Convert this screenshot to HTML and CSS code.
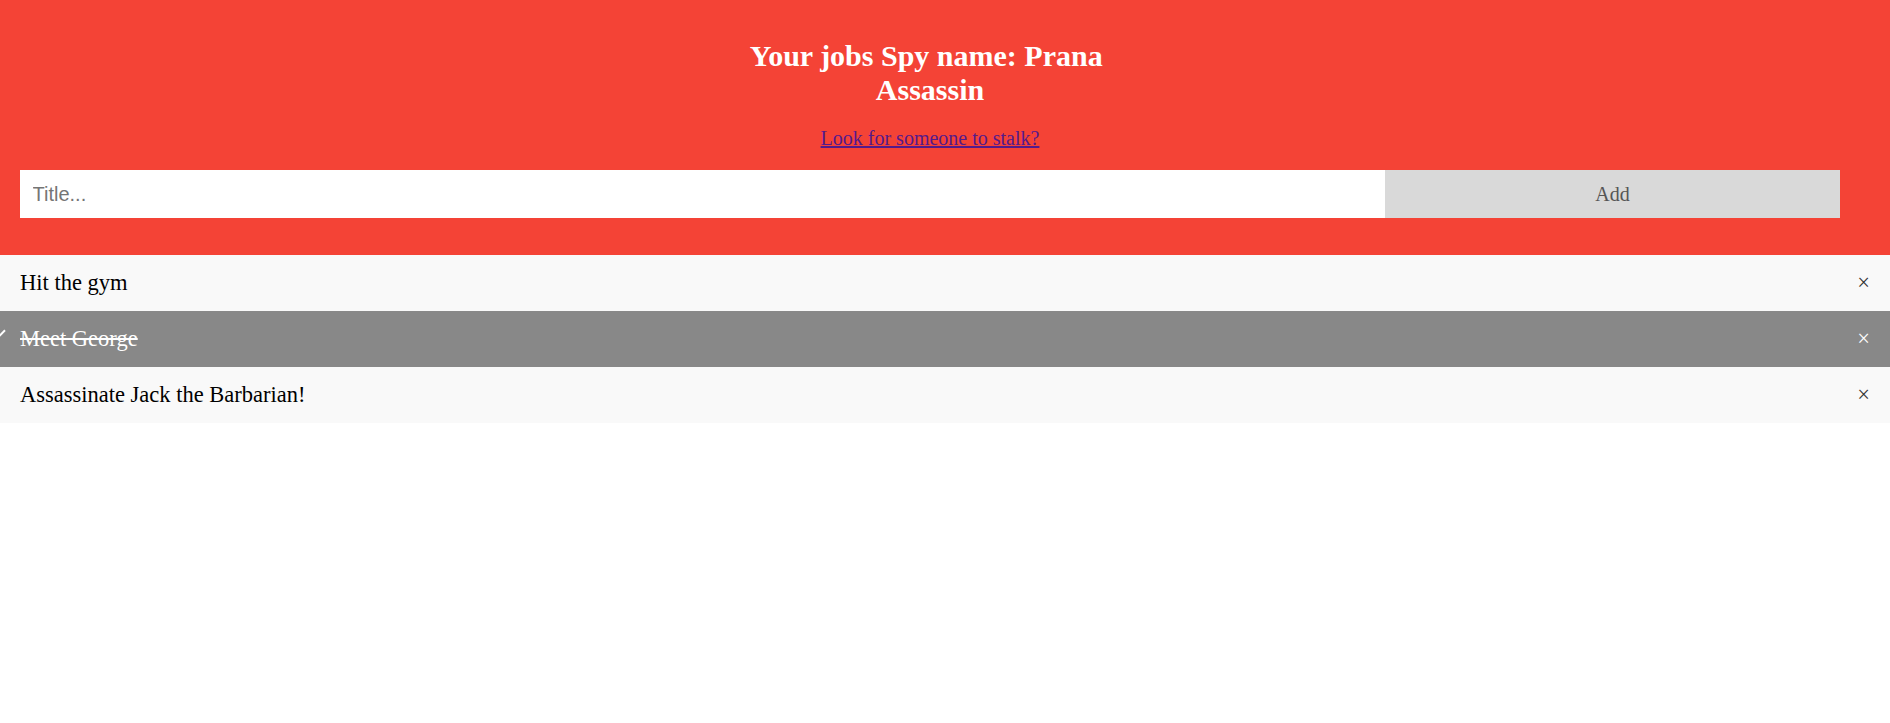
FILE: index.html
```html
<!DOCTYPE html>
<html>
<head>
<meta charset="utf-8">
<title>Spy jobs</title>
<link rel="stylesheet" href="styles.css">
</head>
<body>
<div class="header">
  <h2 class="title">Your jobs Spy name: Prana&nbsp;<br>Assassin</h2>
  <p class="stalk"><a href="#">Look for someone to stalk?</a></p>
  <div class="input-row">
    <input type="text" class="title-input" placeholder="Title...">
    <span class="add-btn">Add</span>
  </div>
</div>
<ul class="jobs">
  <li class="job">Hit the gym<span class="close">×</span></li>
  <li class="job checked">Meet George<span class="close">×</span></li>
  <li class="job">Assassinate Jack the Barbarian!<span class="close">×</span></li>
</ul>
</body>
</html>
```
FILE: styles.css
```css
* { box-sizing: border-box; }
html, body { margin: 0; padding: 0; background: #fff; }
body { font-family: "Liberation Serif", "Times New Roman", serif; overflow-x: hidden; }

.header {
  background-color: #f44336;
  color: #fff;
  text-align: center;
  padding: 39px 50px 37px 20px;
}
.title {
  margin: 0 0 20px;
  font-size: 30px;
  font-weight: bold;
  line-height: 34px;
}
.stalk {
  margin: 0 0 21px;
  font-size: 20px;
  line-height: 22px;
}
.stalk a { color: #551a8b; }

.input-row {
  display: grid;
  grid-template-columns: 75% 25%;
}
.title-input {
  margin: 0;
  border: none;
  border-radius: 0;
  padding: 12.5px 12.5px;
  font-family: "Liberation Sans", Arial, sans-serif;
  font-size: 20px;
  line-height: 23px;
  height: 48px;
  outline: none;
  background: #fff;
  color: #000;
}
.title-input::placeholder { color: #757575; }
.add-btn {
  background: #d9d9d9;
  color: #555;
  font-size: 20px;
  line-height: 48px;
  height: 48px;
  text-align: center;
}

.jobs { margin: 0; padding: 0; list-style: none; }
.job {
  position: relative;
  background: #f9f9f9;
  font-size: 22.5px;
  line-height: 26px;
  padding: 15px 20px;
  color: #000;
}
.job.checked {
  background: #888;
  color: #fff;
  text-decoration: line-through;
}
.job.checked::before {
  content: "";
  position: absolute;
  left: -11px;
  top: 12.5px;
  width: 8.75px;
  height: 18.75px;
  box-sizing: content-box;
  border-style: solid;
  border-color: #fff;
  border-width: 0 2.5px 2.5px 0;
  transform: rotate(45deg);
}
.close {
  position: absolute;
  right: 0;
  top: 0;
  padding: 15px 20px;
  color: #333;
  text-decoration: none;
  font-size: 22.5px;
  line-height: 26px;
}
.job.checked .close { color: #fff; }
```
